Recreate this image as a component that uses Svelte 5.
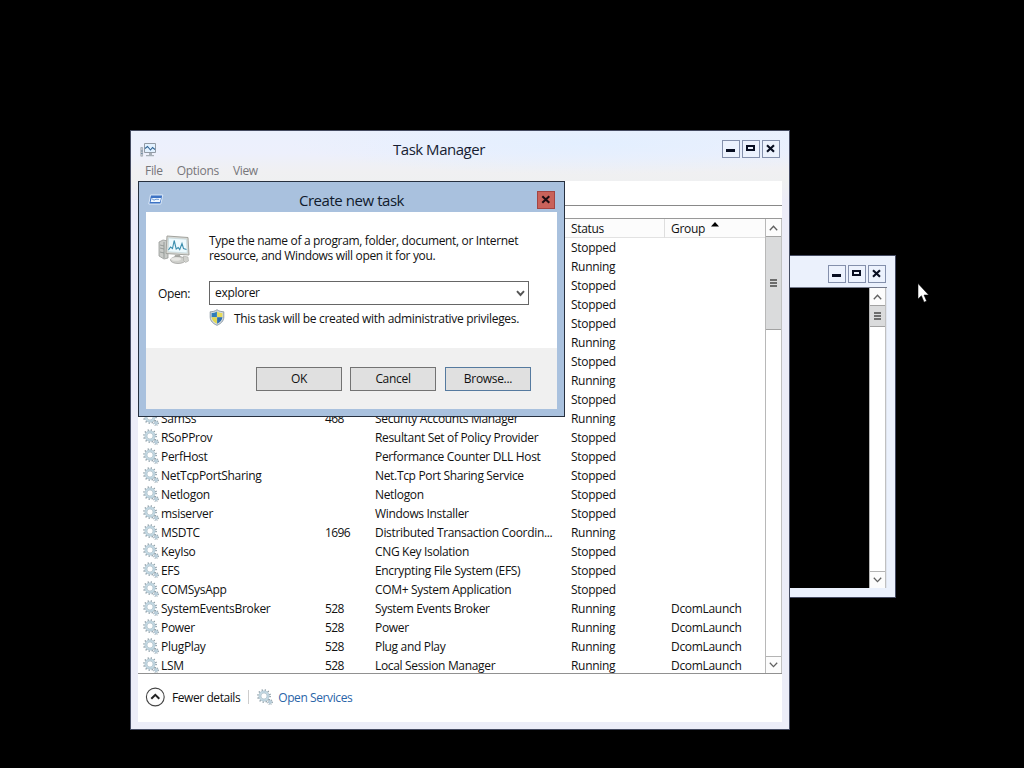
<script>
  const services = [
    ['', '', '', 'Stopped', ''],
    ['', '', '', 'Running', ''],
    ['', '', '', 'Stopped', ''],
    ['', '', '', 'Stopped', ''],
    ['', '', '', 'Stopped', ''],
    ['', '', '', 'Running', ''],
    ['', '', '', 'Stopped', ''],
    ['', '', '', 'Running', ''],
    ['', '', '', 'Stopped', ''],
    ['SamSs', '468', 'Security Accounts Manager', 'Running', ''],
    ['RSoPProv', '', 'Resultant Set of Policy Provider', 'Stopped', ''],
    ['PerfHost', '', 'Performance Counter DLL Host', 'Stopped', ''],
    ['NetTcpPortSharing', '', 'Net.Tcp Port Sharing Service', 'Stopped', ''],
    ['Netlogon', '', 'Netlogon', 'Stopped', ''],
    ['msiserver', '', 'Windows Installer', 'Stopped', ''],
    ['MSDTC', '1696', 'Distributed Transaction Coordin...', 'Running', ''],
    ['KeyIso', '', 'CNG Key Isolation', 'Stopped', ''],
    ['EFS', '', 'Encrypting File System (EFS)', 'Stopped', ''],
    ['COMSysApp', '', 'COM+ System Application', 'Stopped', ''],
    ['SystemEventsBroker', '528', 'System Events Broker', 'Running', 'DcomLaunch'],
    ['Power', '528', 'Power', 'Running', 'DcomLaunch'],
    ['PlugPlay', '528', 'Plug and Play', 'Running', 'DcomLaunch'],
    ['LSM', '528', 'Local Session Manager', 'Running', 'DcomLaunch'],
  ];
</script>

{#snippet gear()}
  <svg class="gear" width="16" height="16" viewBox="0 0 16 16" fill="none">
    <circle cx="7" cy="7" r="6.1" stroke="#8b9ca5" stroke-width="1.6" stroke-dasharray="1.2 1.995" />
    <circle cx="7" cy="7" r="4.2" stroke="#c3d9e4" stroke-width="2" />
    <circle cx="7" cy="7" r="5.2" stroke="#9fb5c1" stroke-width=".5" />
    <circle cx="7" cy="7" r="3.1" stroke="#8fa9b7" stroke-width=".6" fill="#fff" />
    <circle cx="13" cy="13" r="2.3" stroke="#8b9ca5" stroke-width="1.2" stroke-dasharray=".9 .9" />
    <circle cx="13" cy="13" r="1.3" stroke="#9db9ca" stroke-width="1" fill="#e8f1f6" />
  </svg>
{/snippet}

{#snippet controls()}
  <div class="controls">
    <button aria-label="Minimize"><svg width="16" height="16"><path d="M3 8h9v3H3z" fill="#070d20" /></svg></button>
    <button aria-label="Maximize"><svg width="16" height="16"><path d="M4 5h7v4H4z" fill="none" stroke="#070d20" stroke-width="2" /></svg></button>
    <button aria-label="Close"><svg width="16" height="16"><path d="M4 4.300l7 6.400M11 4.300l-7 6.400" stroke="#070d20" stroke-width="2.2" /></svg></button>
  </div>
{/snippet}

{#snippet arrow(down)}
  <div class="arrow" class:down>
    <svg width="9" height="6" viewBox="0 0 9 6"><path d={down ? 'M.8 .8L4.5 4.6L8.2 .8' : 'M.8 5.2L4.5 1.2L8.2 5.2'} fill="none" stroke="#606060" stroke-width="1.3" /></svg>
  </div>
{/snippet}

<div class="desktop">
  <section class="window console">
    <header class="console-title">{@render controls()}</header>
    <div class="console-body">
      <div class="screen"></div>
      <div class="scroll">
        {@render arrow(false)}
        <div class="thumb"><i></i><i></i><i></i></div>
        <div class="track"></div>
        {@render arrow(true)}
      </div>
    </div>
  </section>

  <section class="window manager">
    <header class="titlebar">
      <svg class="app-icon" width="17" height="16" viewBox="0 0 17 16">
        <path d="M.8 5.500h1.800v8.700H.8z" fill="#c8cdd3" stroke="#98a0a9" stroke-width=".7" />
        <path d="M1 9h1.600M1 11.500h1.600" stroke="#5d7a98" stroke-width=".8" />
        <path d="M4.500 1.500h11v9h-11z" fill="#e2f1ff" stroke="#929aa5" />
        <path d="M5 6.500l2.500-2 3 3.500 2-2.500 2.500 2" fill="none" stroke="#336596" stroke-width="1.100" />
        <path d="M9 11h3v2h2v1.300H6V13h3z" fill="#a8b0b8" />
      </svg>
      <h1>Task Manager</h1>
      {@render controls()}
    </header>
    <nav><span>File</span><span>Options</span><span>View</span></nav>
    <main>
      <div class="tabs"></div>
      <div class="list">
        <div class="table">
          <div class="row head">
            <span></span><span></span><span></span>
            <span class="status">Status</span>
            <span class="group">Group<svg width="8" height="5"><path d="M0 4.500L4 0l4 4.500z" fill="#000" /></svg></span>
          </div>
          {#each services as s}
            <div class="row">
              <span class="name">{#if s[0]}{@render gear()}{s[0]}{/if}</span>
              <span class="pid">{s[1]}</span><span class="desc">{s[2]}</span><span>{s[3]}</span><span>{s[4]}</span>
            </div>
          {/each}
        </div>
        <div class="scroll">
          {@render arrow(false)}
          <div class="thumb tall"><i></i><i></i><i></i></div>
          <div class="track"></div>
          {@render arrow(true)}
        </div>
      </div>
      <footer>
        <svg width="20" height="20" viewBox="0 0 20 20" fill="none"><circle cx="10.300" cy="10" r="8.900" stroke="#444" stroke-width="1.100" fill="#fdfdfd" /><path d="M6.300 11.800l4-4 4 4" stroke="#222" stroke-width="2" /></svg>
        <span class="fewer">Fewer details</span>
        <span class="sep"></span>
        {@render gear()}
        <span class="link">Open Services</span>
      </footer>
    </main>
  </section>

  <section class="dialog">
    <header>
      <svg width="16" height="12" viewBox="0 0 16 12">
        <path d="M2.500 1h12.300l-2 9H.8z" fill="#3d73c4" stroke="#e7f1fc" stroke-width=".9" />
        <path d="M3.600 4h9.400l-1 4H2.600z" fill="#eef7ff" />
        <path d="M4 4.800l2 1.400 2-1 3 .2" fill="none" stroke="#5a8bcf" stroke-width=".9" />
      </svg>
      <h2>Create new task</h2>
      <button class="close" aria-label="Close"><svg width="16" height="16"><path d="M4.300 4.300l7 6.400M11.300 4.300l-7 6.400" stroke="#1c0d12" stroke-width="2.100" /></svg></button>
    </header>
    <div class="body">
      <div class="intro">
        <svg width="32" height="30" viewBox="0 0 32 30">
          <path d="M1 7l4-2 5 1v17l-4 1-5-3z" fill="#c9cbc8" stroke="#989b98" stroke-width=".8" />
          <path d="M2 10l4 1M2 13l4 1M2 17l4 1M6 7v16" stroke="#8b908e" stroke-width=".8" />
          <path d="M9 1l21 1.500 1 17.500L8 18.500z" fill="#d9dad6" stroke="#a2a39e" />
          <path d="M10.500 3l18 1.300.7 13.700-19-1.300z" fill="#eefafe" stroke="#bed3d9" stroke-width=".6" />
          <path d="M10.500 15l2-3 2 1.500L16.200 5.500l2 8.500 2-1.500 1.500 2L24 8.500l1.500 5 3 1" fill="none" stroke="#3b8eae" stroke-width="1.100" />
          <path d="M17 20h5l1 3h-7z" fill="#aaaba6" />
          <ellipse cx="20" cy="25" rx="7.500" ry="3.500" fill="#cfd0cc" stroke="#999a96" stroke-width=".7" />
          <ellipse cx="18" cy="24" rx="5" ry="1.800" fill="#e7e7e4" />
          <path d="M25.500 21l4.500 1 .5 4-3 1.500-2-2z" fill="#d0d1cd" stroke="#a0a19d" stroke-width=".5" />
        </svg>
        <p><span>Type the name of a program, folder, document, or Internet</span><br /><span>resource, and Windows will open it for you.</span></p>
      </div>
      <div class="field">
        <label for="cmd">Open:</label>
        <div class="combo" id="cmd"><span>explorer</span><svg width="9" height="7" viewBox="0 0 9 7"><path d="M1 1.200l3.500 3.800L8 1.200" fill="none" stroke="#555" stroke-width="1.900" /></svg></div>
      </div>
      <div class="admin">
        <svg width="16" height="17" viewBox="0 0 16 17">
          <path d="M8 .7C6 2.300 3.500 2.700 1.200 2.800V8c0 4 3 6.700 6.800 8.300 3.800-1.600 6.800-4.300 6.800-8.300V2.800C12.500 2.700 10 2.300 8 .7z" fill="#d5dce1" stroke="#87949f" stroke-width=".9" />
          <path d="M7.900 2.400C6.400 3.400 4.500 3.900 2.600 4v4.300h5.300z" fill="#2f7cb9" />
          <path d="M8.100 2.400c1.500 1 3.400 1.500 5.300 1.600v4.300H8.100z" fill="#e8dc5a" />
          <path d="M2.600 8.300h5.300v6.400C5 13.200 2.800 11.200 2.600 8.300z" fill="#e2d850" />
          <path d="M13.400 8.300H8.100v6.400C11 13.200 13.200 11.200 13.400 8.300z" fill="#2f6fae" />
        </svg>
        <span>This task will be created with administrative privileges.</span>
      </div>
      <div class="actions"><button>OK</button><button>Cancel</button><button class="hot">Browse...</button></div>
    </div>
  </section>

  <svg class="cursor" width="12" height="21" viewBox="0 0 12 21"><path d="M1 .5v15.500l3.400-3.300 2.700 6.500 2.500-1.200-2.600-6h4.700z" fill="#fff" stroke="#000" stroke-width=".5" /></svg>
</div>

<style>
  :global(body) { background: #000; overflow: hidden; }
  * { box-sizing: border-box; }
  .desktop {
    position: relative; width: 1024px; height: 768px; overflow: hidden; background: #000;
    font: 12px/19px "Open Sans", "Noto Sans", sans-serif; letter-spacing: -.31px; color: #111;
  }
  svg { display: block; flex: none; }
  button { padding: 0; border-radius: 0; font: inherit; letter-spacing: inherit; color: inherit; }
  h1, h2, p { margin: 0; font-weight: 400; }
  .window { position: absolute; border: 1px solid #454b61; display: flex; flex-direction: column; }
  .controls { display: flex; gap: 2px; }
  .controls button { width: 18px; height: 18px; border: 1px solid #8490ac; background: #ecf2fd; }

  .console { left: 600px; top: 255px; width: 296px; height: 343px; padding: 0 8px 9px; background: #ebf1fc; }
  .console-title { height: 32px; padding: 9px 1px 0 0; display: flex; justify-content: flex-end; border-bottom: 1px solid #73798a; }
  .console-body { flex: 1; display: flex; border-right: 1px solid #dfe4ee; }
  .screen { flex: 1; background: #000; }

  .manager { left: 130px; top: 130px; width: 660px; height: 600px; padding: 0 7px 7px; background: radial-gradient(ellipse 300px 32px at 70% 12px, #e3efff, transparent), linear-gradient(#ebf0fd, #edf0fc 22px, #f0f0f2 40px, #eff0f1 50px, #ececf8 70px, #ecedf8); }
  .titlebar { height: 31px; padding: 9px 2px 0; display: flex; align-items: flex-start; }
  .app-icon { margin-top: 2px; }
  h1 { font-size: 15px; line-height: 20px; letter-spacing: -.48px; margin: -1px auto 0 236px; color: #171d32; }
  nav { height: 19px; padding-left: 7px; display: flex; gap: 14px; line-height: 17px; color: #77767a; }
  main { flex: 1; min-height: 0; background: #fff; display: flex; flex-direction: column; }
  .tabs { height: 25px; border-bottom: 1px solid #898989; }
  .list { margin-top: 12px; height: 456px; border-top: 1px solid #999; border-bottom: 1px solid #919191; display: flex; }
  .table { flex: 1; overflow: hidden; }
  .row { display: grid; grid-template-columns: 181px 50px 196px 100px 1fr; height: 19px; white-space: nowrap; }
  .row > span { padding-left: 6px; }
  .row > .name { padding-left: 5px; display: flex; gap: 2px; }
  .row > .pid { letter-spacing: -.6px; }
  .row > .desc { letter-spacing: -.33px; }
  .row .gear { margin-top: 1px; }
  .head { background: #fcfcfc; border-bottom: 1px solid #e2e2e2; }
  .head span { border-right: 1px solid #dedede; }
  .head .group { display: flex; gap: 6px; border: 0; }
  .head svg { margin-top: 3px; }

  .scroll { width: 17px; display: flex; flex-direction: column; background: #fff; border-left: 1px solid #b8b8b8; border-right: 1px solid #c0c0c0; }
  .arrow { height: 17px; display: grid; place-items: center; background: #fcfcfc; }
  .arrow.down { border-top: 1px solid #b4b4b4; }
  .track { flex: 1; }
  .thumb { height: 22px; background: #dadbdc; border: solid #a2a2a2; border-width: 1px 0; display: flex; flex-direction: column; gap: 1px; align-items: center; justify-content: center; }
  .thumb.tall { height: 94px; }
  .thumb i { width: 7px; height: 2px; background: #6c6c6c; }

  footer { flex: 1; display: flex; align-items: center; padding: 0 0 2px 7px; }
  .fewer { margin-left: 7px; letter-spacing: -.43px; }
  .sep { width: 1px; height: 14px; background: #cdcdcd; margin: 0 8px; }
  .link { margin-left: 5px; letter-spacing: -.4px; color: #2a65a8; }

  .dialog { position: absolute; left: 138px; top: 181px; width: 427px; height: 236px; padding: 0 7px 7px; border: 1px solid #26303f; background: #a9c1de; display: flex; flex-direction: column; }
  .dialog header { height: 30px; padding: 9px 2px 0; display: flex; justify-content: space-between; align-items: flex-start; }
  .dialog header > svg { margin-top: 3px; }
  h2 { font-size: 15px; line-height: 20px; letter-spacing: -.45px; margin-top: -1px; padding-left: 2px; color: #101a2c; }
  .close { width: 18px; height: 18px; border: 1px solid #a34542; background: #c9625a; }
  .body { flex: 1; background: #fff; display: flex; flex-direction: column; }
  .intro { display: flex; padding: 21px 0 0 12px; gap: 19px; height: 69px; line-height: 15px; letter-spacing: -.34px; white-space: nowrap; }
  .intro svg { margin-top: 2px; }
  .field { display: flex; align-items: center; padding-left: 12px; height: 24px; }
  label { width: 51px; letter-spacing: -.4px; }
  .combo { width: 320px; height: 24px; border: 1px solid #666; background: #fff; display: flex; align-items: center; justify-content: space-between; padding: 0 3px 2px 5px; }
  .combo svg { margin-top: 2px; }
  .admin { height: 43px; padding: 4px 0 0 63px; display: flex; gap: 9px; }
  .actions { flex: 1; background: #f0f0f0; padding: 19px 26px 0; display: flex; justify-content: flex-end; gap: 8px; }
  .actions button { width: 86px; height: 24px; border: 1px solid #737373; background: #e0e0e0; line-height: 20px; }
  .actions .hot { border-color: #557a9f; margin-left: 1px; }
  .cursor { position: absolute; left: 917px; top: 283px; }
</style>
